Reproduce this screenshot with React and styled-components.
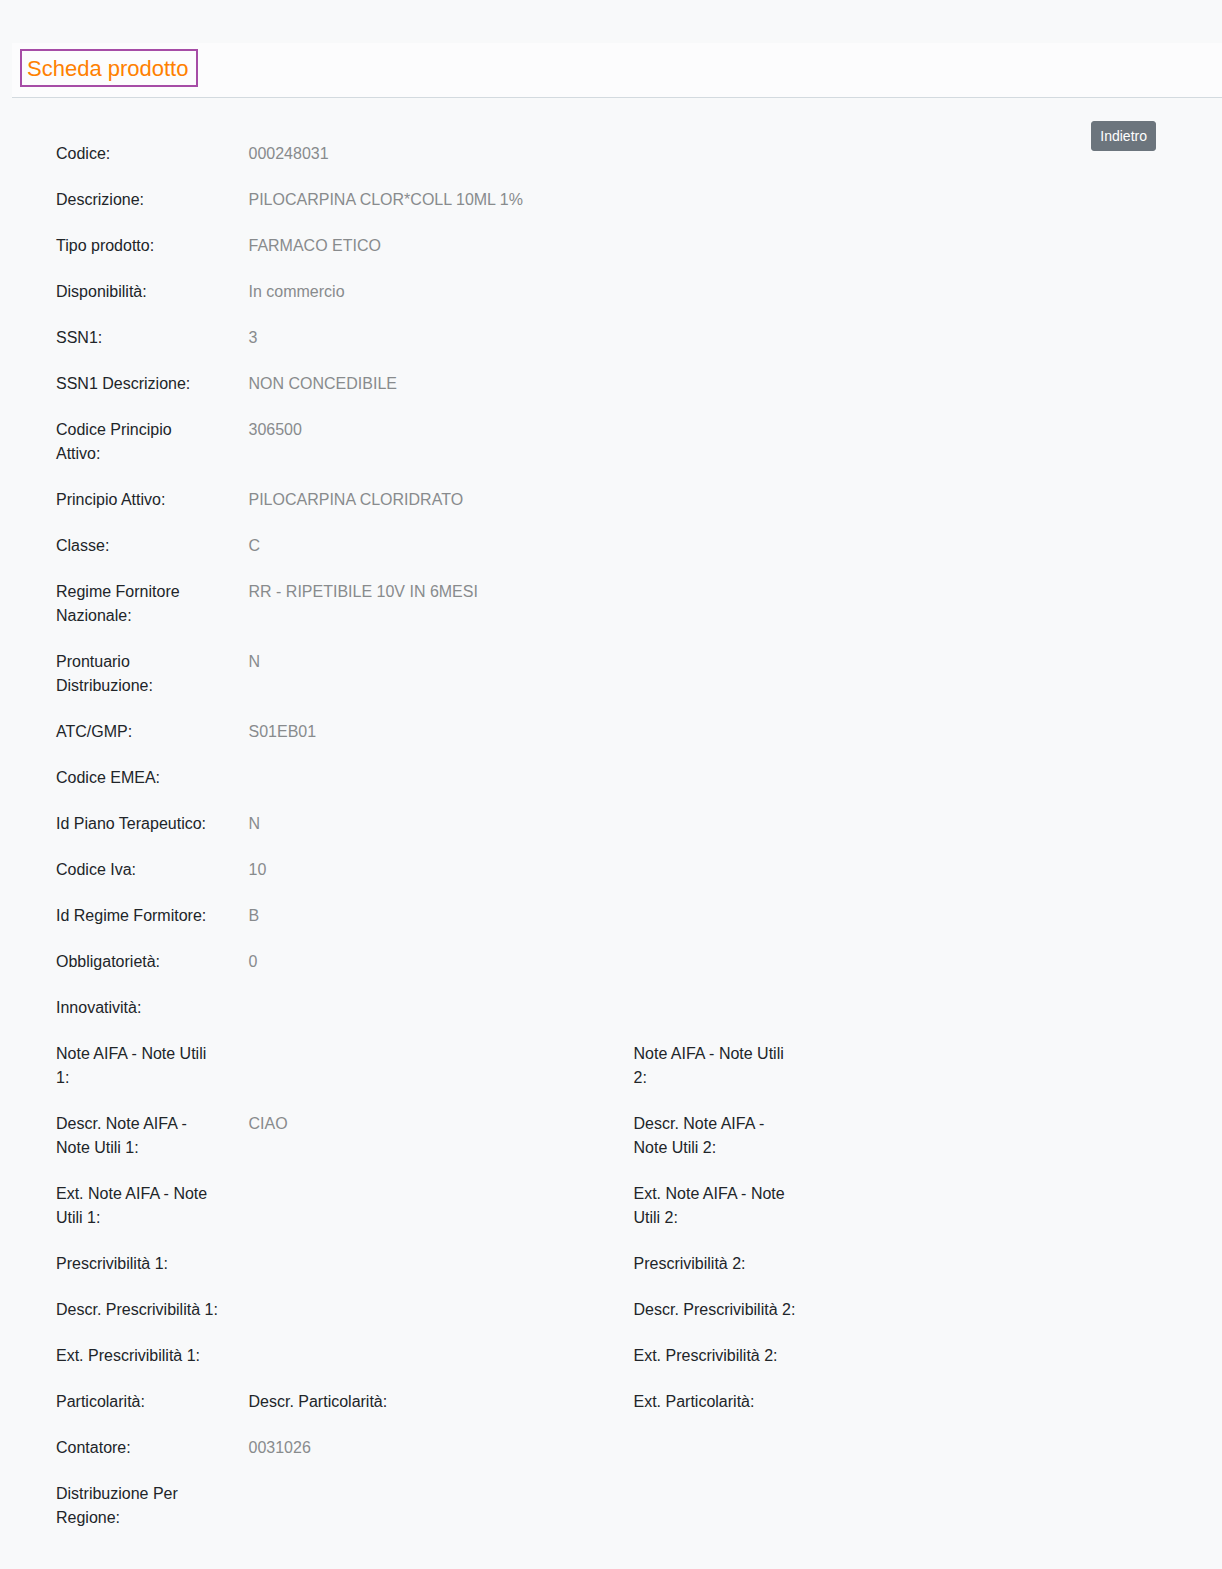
import styled, { createGlobalStyle } from 'styled-components';

const GlobalStyle = createGlobalStyle`
  html, body {
    margin: 0;
    padding: 0;
    background: #f8f9fa;
  }
  body {
    font-family: "Liberation Sans", Arial, sans-serif;
    color: #212529;
  }
`;

const Page = styled.div`
  padding: 43px 0 30px 12px;
  min-height: 1569px;
  box-sizing: border-box;
`;

const Header = styled.div`
  background: #fcfcfd;
  padding: 6px 8px 10px;
  border-bottom: 1px solid #d3dadf;
`;

const Title = styled.h1`
  display: inline-block;
  margin: 0;
  padding: 6px 8px 4px 5px;
  border: 2px solid #a64ca6;
  color: #ff8000;
  font-size: 22px;
  font-weight: 400;
  line-height: 24px;
`;

const Content = styled.div`
  padding: 23px 26px 0 29px;
`;

const Toolbar = styled.div`
  display: flex;
  justify-content: flex-end;
  padding-right: 40px;
  margin-bottom: -20px;
  position: relative;
  z-index: 1;
`;

const BackButton = styled.button`
  height: 30px;
  padding: 0 8px;
  background: #6c757d;
  border: 1px solid #6c757d;
  border-radius: 3px;
  color: #fff;
  font-family: "Liberation Sans", Arial, sans-serif;
  font-size: 14px;
  cursor: pointer;
`;

const Row = styled.div`
  display: grid;
  grid-template-columns: 2fr 4fr 2fr 4fr;
  width: 1155px;
  padding: 11px 0;
`;

const Cell = styled.div`
  padding: 0 15px;
  font-size: 16px;
  line-height: 24px;
  color: ${({ $value }) => ($value ? '#888b8d' : '#212529')};
`;

const rows = [
  ['Codice:', '000248031'],
  ['Descrizione:', 'PILOCARPINA CLOR*COLL 10ML 1%'],
  ['Tipo prodotto:', 'FARMACO ETICO'],
  ['Disponibilità:', 'In commercio'],
  ['SSN1:', '3'],
  ['SSN1 Descrizione:', 'NON CONCEDIBILE'],
  ['Codice Principio Attivo:', '306500'],
  ['Principio Attivo:', 'PILOCARPINA CLORIDRATO'],
  ['Classe:', 'C'],
  ['Regime Fornitore Nazionale:', 'RR - RIPETIBILE 10V IN 6MESI'],
  ['Prontuario Distribuzione:', 'N'],
  ['ATC/GMP:', 'S01EB01'],
  ['Codice EMEA:', ''],
  ['Id Piano Terapeutico:', 'N'],
  ['Codice Iva:', '10'],
  ['Id Regime Formitore:', 'B'],
  ['Obbligatorietà:', '0'],
  ['Innovatività:', ''],
  ['Note AIFA - Note Utili 1:', '', 'Note AIFA - Note Utili 2:'],
  ['Descr. Note AIFA - Note Utili 1:', 'CIAO', 'Descr. Note AIFA - Note Utili 2:'],
  ['Ext. Note AIFA - Note Utili 1:', '', 'Ext. Note AIFA - Note Utili 2:'],
  ['Prescrivibilità 1:', '', 'Prescrivibilità 2:'],
  ['Descr. Prescrivibilità 1:', '', 'Descr. Prescrivibilità 2:'],
  ['Ext. Prescrivibilità 1:', '', 'Ext. Prescrivibilità 2:'],
];

export default function App() {
  return (
    <>
      <GlobalStyle />
      <Page>
        <Header>
          <Title>Scheda prodotto</Title>
        </Header>
        <Content>
          <Toolbar>
            <BackButton>Indietro</BackButton>
          </Toolbar>
          {rows.map(([label, value, right]) => (
            <Row key={label}>
              <Cell>{label}</Cell>
              <Cell $value>{value}</Cell>
              {right && <Cell>{right}</Cell>}
            </Row>
          ))}
          <Row>
            <Cell>Particolarità:</Cell>
            <Cell>Descr. Particolarità:</Cell>
            <Cell>Ext. Particolarità:</Cell>
          </Row>
          <Row>
            <Cell>Contatore:</Cell>
            <Cell $value>0031026</Cell>
          </Row>
          <Row>
            <Cell>Distribuzione Per Regione:</Cell>
          </Row>
        </Content>
      </Page>
    </>
  );
}
